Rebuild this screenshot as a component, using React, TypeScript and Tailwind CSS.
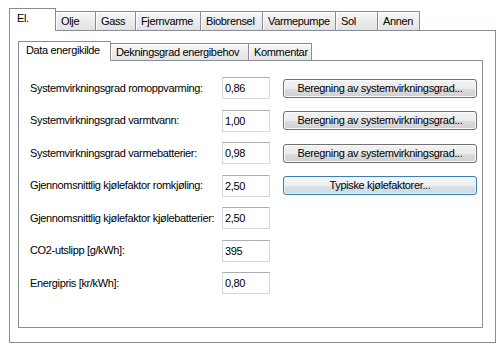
const outerTabs = [
  { label: 'El.', w: 'w-[47px]', active: true },
  { label: 'Olje', w: 'w-[41px]' },
  { label: 'Gass', w: 'w-[41px]' },
  { label: 'Fjernvarme', w: 'w-[66px]' },
  { label: 'Biobrensel', w: 'w-[63px]' },
  { label: 'Varmepumpe', w: 'w-[74px]' },
  { label: 'Sol', w: 'w-[43px]' },
  { label: 'Annen', w: 'w-[43px]' },
];

const innerTabs = [
  { label: 'Data energikilde', w: 'w-[93px]', active: true },
  { label: 'Dekningsgrad energibehov', w: 'w-[139px]' },
  { label: 'Kommentar', w: 'w-[64px]' },
];

const rows = [
  { label: 'Systemvirkningsgrad romoppvarming:', value: '0,86', button: 'Beregning av systemvirkningsgrad...' },
  { label: 'Systemvirkningsgrad varmtvann:', value: '1,00', button: 'Beregning av systemvirkningsgrad...' },
  { label: 'Systemvirkningsgrad varmebatterier:', value: '0,98', button: 'Beregning av systemvirkningsgrad...' },
  { label: 'Gjennomsnittlig kjølefaktor romkjøling:', value: '2,50', button: 'Typiske kjølefaktorer...', focused: true },
  { label: 'Gjennomsnittlig kjølefaktor kjølebatterier:', value: '2,50' },
  { label: 'CO2-utslipp [g/kWh]:', value: '395' },
  { label: 'Energipris [kr/kWh]:', value: '0,80' },
];

function Tab({ label, w, active }: { label: string; w: string; active?: boolean }) {
  if (active) {
    return (
      <div className={`${w} relative z-10 -mb-px flex h-[20px] shrink-0 items-start border border-b-0 border-[#898c95] bg-white pl-[7px] pt-[2px]`}>
        {label}
      </div>
    );
  }
  return (
    <div className={`${w} -ml-px flex h-[17px] shrink-0 items-center border border-b-0 border-[#898c95] bg-[linear-gradient(to_bottom,#f7f7f7,#e4e4e4)] pl-[5px] shadow-[inset_1px_1px_0_#ffffff]`}>
      {label}
    </div>
  );
}

function BigTab({ label, w, active }: { label: string; w: string; active?: boolean }) {
  if (active) {
    return (
      <div className={`${w} relative z-10 -mb-px flex h-[23px] shrink-0 items-start border border-b-0 border-[#898c95] bg-white pl-[7px] pt-[3px]`}>
        {label}
      </div>
    );
  }
  return (
    <div className={`${w} -ml-px flex h-[19px] shrink-0 items-center border border-b-0 border-[#898c95] bg-[linear-gradient(to_bottom,#f7f7f7,#e2e2e2)] pl-[5px] shadow-[inset_1px_1px_0_#ffffff]`}>
      {label}
    </div>
  );
}

export default function App() {
  return (
    <div className="h-[352px] w-[504px] whitespace-nowrap bg-white pl-[9px] pt-[8px] font-['Liberation_Sans',Arial,sans-serif] text-[11px] leading-[13px] tracking-[-0.35px] text-black">
      <div className="flex h-[22px] items-end">
        {outerTabs.map((t) => (
          <BigTab key={t.label} {...t} />
        ))}
      </div>
      <div className="h-[313px] w-[487px] border border-[#898c95] pl-[8px] pt-[11px]">
        <div className="flex h-[18px] items-end">
          {innerTabs.map((t) => (
            <Tab key={t.label} {...t} />
          ))}
        </div>
        <div className="h-[268px] w-[465px] border border-[#898c95] pl-[11px] pt-[16px]">
          <div className="flex flex-col gap-[10.5px]">
            {rows.map((r) => (
              <div key={r.label} className="flex h-[22px] items-center">
                <div className="w-[192px] shrink-0">{r.label}</div>
                <input
                  readOnly
                  value={r.value}
                  className="h-[22px] w-[48px] shrink-0 border border-[#d5d8de] border-t-[#abadb3] bg-white pl-[2px] text-[11px] tracking-[-0.35px] outline-none"
                />
                {r.button && (
                  <button
                    className={
                      r.focused
                        ? 'ml-[13px] h-[19px] w-[194px] rounded-[3px] border border-[#3c7fb1] bg-[linear-gradient(to_bottom,#f3f7fa_0%,#e9eff3_50%,#dae3ea_50%,#cdd8e0_100%)] text-center tracking-[-0.35px] shadow-[inset_0_0_0_1px_#e6f3fa]'
                        : 'ml-[13px] h-[19px] w-[194px] rounded-[3px] border border-[#707070] bg-[linear-gradient(to_bottom,#f2f2f2_0%,#ebebeb_50%,#dddddd_50%,#cfcfcf_100%)] text-center tracking-[-0.35px] shadow-[inset_0_0_0_1px_#fcfcfc]'
                    }
                  >
                    {r.button}
                  </button>
                )}
              </div>
            ))}
          </div>
        </div>
      </div>
    </div>
  );
}
